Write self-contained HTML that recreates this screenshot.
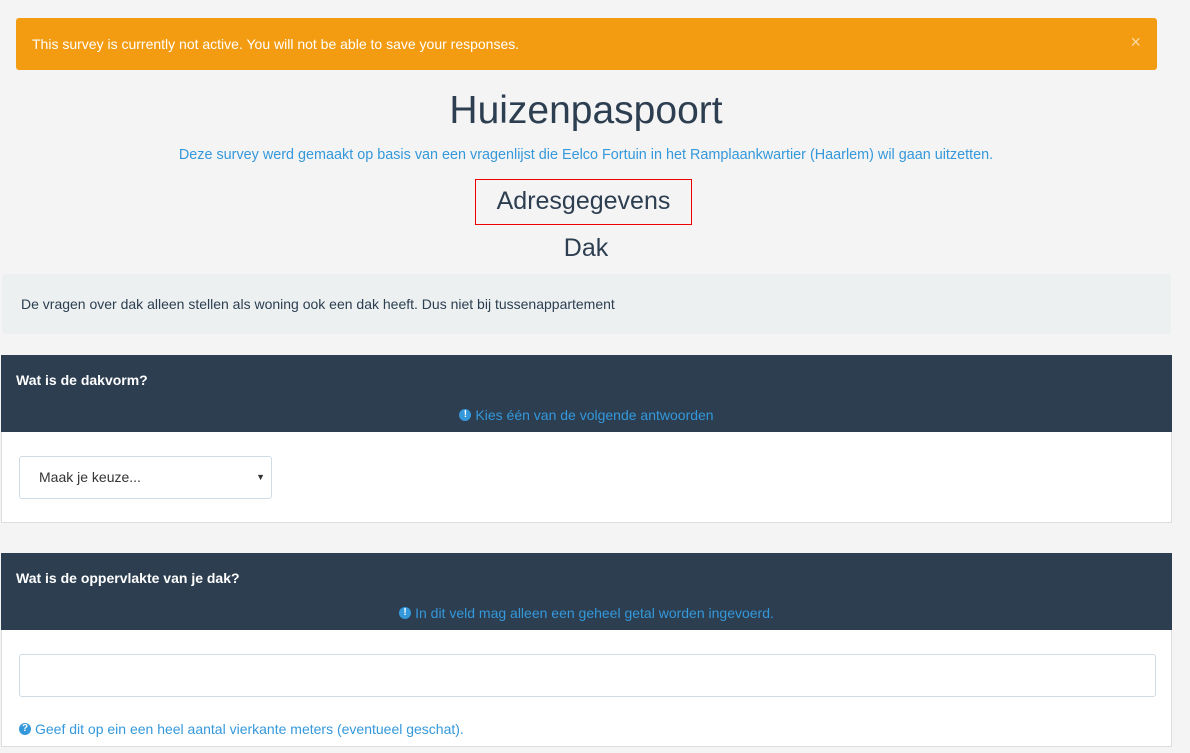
<!DOCTYPE html>
<html><head><style>
body{margin:0;background:#f4f4f4;font-family:"Liberation Sans",sans-serif;width:1190px;height:753px;overflow:hidden;position:relative;color:#2c3e50}
.a{position:absolute}
.alert{left:16px;top:18px;width:1141px;height:52px;background:#f39c12;border-radius:3px;color:#fff;font-size:14px}
.hd{background:#2c3e50;color:#fff;font-size:14px;font-weight:bold}
.bd{background:#fff;border:1px solid #ddd;border-top:none}
.blue{color:#3498db}
.ic{display:inline-block;width:12px;height:12px;border-radius:50%;background:#3498db;color:#fff;font-size:10px;line-height:12px;text-align:center;font-weight:bold;vertical-align:top;margin-top:2px;margin-right:4px}
</style></head><body>
<div class="a alert"><span class="a" style="left:16px;top:18px">This survey is currently not active. You will not be able to save your responses.</span><span class="a" style="right:16px;top:14px;font-size:18px;color:#fbd9a0">×</span></div>
<div class="a" style="left:0;width:1172px;top:89px;text-align:center;font-size:39px">Huizenpaspoort</div>
<div class="a blue" style="left:0;width:1172px;top:147px;text-align:center;font-size:14.4px">Deze survey werd gemaakt op basis van een vragenlijst die Eelco Fortuin in het Ramplaankwartier (Haarlem) wil gaan uitzetten.</div>
<div class="a" style="left:475px;top:179px;width:215px;height:44px;border:1px solid #e00;text-align:center;font-size:25px;line-height:42px">Adresgegevens</div>
<div class="a" style="left:0;width:1172px;top:234px;text-align:center;font-size:25px">Dak</div>
<div class="a" style="left:2px;top:274px;width:1169px;height:60px;background:#ecf0f1;border-radius:3px;font-size:14px"><span class="a" style="left:19px;top:22px">De vragen over dak alleen stellen als woning ook een dak heeft. Dus niet bij tussenappartement</span></div>
<div class="a hd" style="left:1px;top:355px;width:1171px;height:77px"><span class="a" style="left:15px;top:17px">Wat is de dakvorm?</span><div class="a blue" style="left:0;width:1171px;top:52px;text-align:center;font-weight:normal"><span class="ic">!</span>Kies één van de volgende antwoorden</div></div>
<div class="a bd" style="left:1px;top:432px;width:1169px;height:90px"><div class="a" style="left:17px;top:24px;width:251px;height:41px;border:1px solid #cfdbe5;border-radius:3px;font-size:14px;color:#333"><span class="a" style="left:19px;top:12px">Maak je keuze...</span><span class="a" style="right:6px;top:15px;font-size:9px">▼</span></div></div>
<div class="a hd" style="left:1px;top:553px;width:1171px;height:77px"><span class="a" style="left:15px;top:17px">Wat is de oppervlakte van je dak?</span><div class="a blue" style="left:0;width:1171px;top:52px;text-align:center;font-weight:normal"><span class="ic">!</span>In dit veld mag alleen een geheel getal worden ingevoerd.</div></div>
<div class="a bd" style="left:1px;top:630px;width:1169px;height:116px"><div class="a" style="left:17px;top:24px;width:1135px;height:41px;border:1px solid #cfdbe5;border-radius:3px"></div><div class="a blue" style="left:17px;top:91px;font-size:14px"><span class="ic">?</span>Geef dit op ein een heel aantal vierkante meters (eventueel geschat).</div></div>
</body></html>
